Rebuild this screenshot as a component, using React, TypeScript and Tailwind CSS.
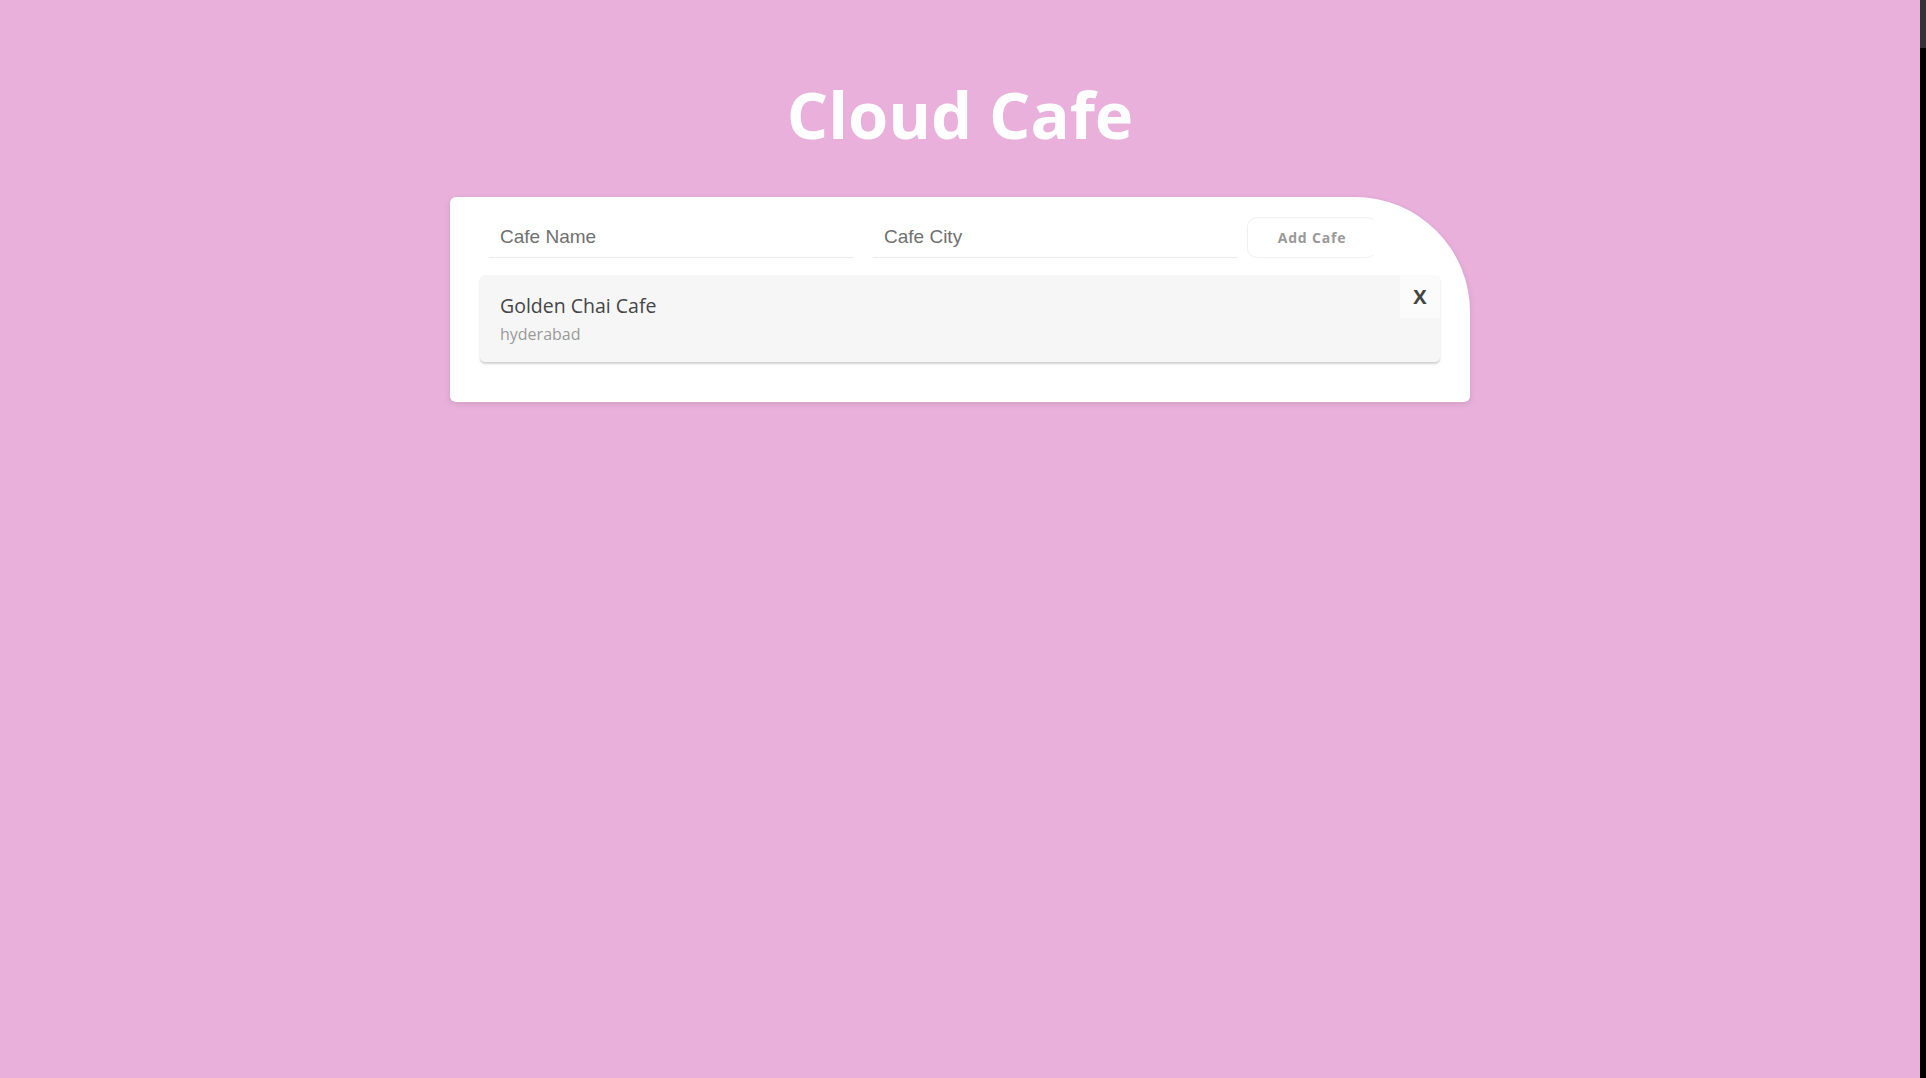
import { useState } from 'react';

type Cafe = { id: number; name: string; city: string };

const CafeItem = ({ cafe, onDelete }: { cafe: Cafe; onDelete: () => void }) => {
  return (
    <li className="flex items-start bg-[#f6f6f6] rounded-[5px] shadow-[0_2px_2px_rgba(0,0,0,0.18)] mb-[10px]">
      <div className="flex-1 pl-[20px] pt-[19px] pb-[18px]">
        <div className="text-[19.5px] leading-[24px] text-[#454545]">{cafe.name}</div>
        <div className="mt-[6px] text-[16px] leading-[20px] text-[#9a9a9a]">{cafe.city}</div>
      </div>
      <button
        onClick={onDelete}
        className="w-[40px] h-[43px] flex items-center justify-center bg-[#fbfbfb] text-[20px] font-bold text-[#444] rounded-tr-[5px]"
      >
        X
      </button>
    </li>
  );
};

export default function App() {
  const [name, setName] = useState('');
  const [city, setCity] = useState('');
  const [cafes, setCafes] = useState<Cafe[]>([
    { id: 1, name: 'Golden Chai Cafe', city: 'hyderabad' },
  ]);

  const addCafe = (e: React.FormEvent) => {
    e.preventDefault();
    if (!name.trim() || !city.trim()) return;
    setCafes((prev) => [...prev, { id: Date.now(), name, city }]);
    setName('');
    setCity('');
  };

  return (
    <div className="min-h-screen flex bg-[#e8b0da] font-['Open_Sans',sans-serif]">
      <main className="flex-1 flex flex-col items-center pt-[82px]">
        <h1 className="text-[65px] leading-[65px] font-bold text-white">Cloud Cafe</h1>

        <div className="mt-[50px] w-[1020px] bg-white rounded-[6px] rounded-tr-[115px] pt-[20px] px-[30px] pb-[30px] shadow-[0_2px_6px_rgba(0,0,0,0.1)]">
          <form onSubmit={addCafe} className="flex items-start ml-[9px]">
            <input
              value={name}
              onChange={(e) => setName(e.target.value)}
              placeholder="Cafe Name"
              className="w-[365px] h-[41px] px-[11px] border-b border-[#ececec] outline-none text-[19px] text-[#555] placeholder:text-[#707070] font-['Liberation_Sans',Arial,sans-serif]"
            />
            <input
              value={city}
              onChange={(e) => setCity(e.target.value)}
              placeholder="Cafe City"
              className="ml-[19px] w-[365px] h-[41px] px-[11px] border-b border-[#ececec] outline-none text-[19px] text-[#555] placeholder:text-[#707070] font-['Liberation_Sans',Arial,sans-serif]"
            />
            <button
              type="submit"
              className="ml-[9px] w-[130px] h-[41px] rounded-[10px] border border-[#f0f0f0] border-r-transparent text-[14px] font-bold tracking-[0.8px] text-[#999]"
            >
              Add Cafe
            </button>
          </form>

          <ul className="mt-[17px]">
            {cafes.map((cafe) => (
              <CafeItem
                key={cafe.id}
                cafe={cafe}
                onDelete={() => setCafes((prev) => prev.filter((c) => c.id !== cafe.id))}
              />
            ))}
          </ul>
        </div>
      </main>

      {/* scrollbar strip */}
      <div className="w-[6px] bg-black">
        <div className="h-[48px] bg-[#333]" />
      </div>
    </div>
  );
}
